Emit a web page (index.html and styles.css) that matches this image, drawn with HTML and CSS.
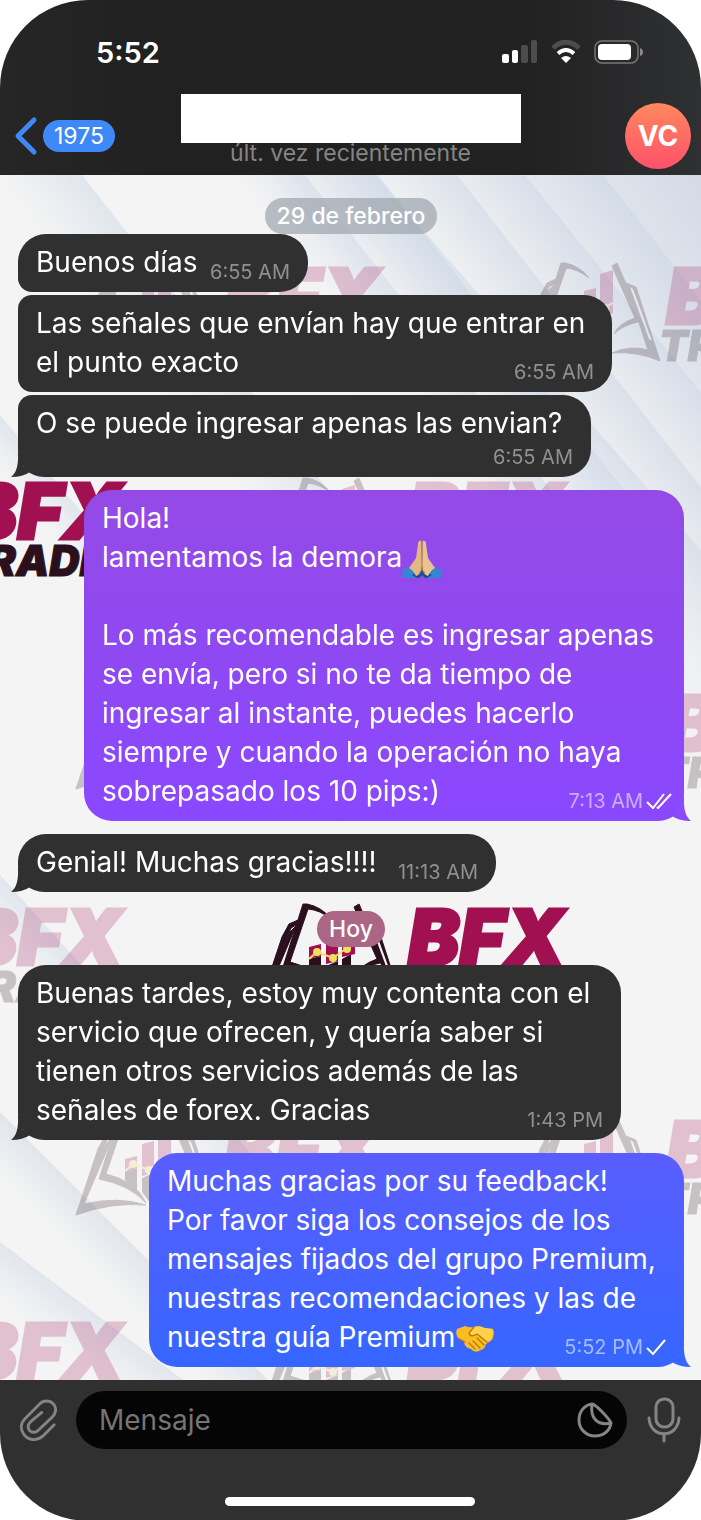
FILE: index.html
```html
<!DOCTYPE html>
<html lang="es">
<head>
    <meta charset="UTF-8">
    <meta name="viewport" content="width=device-width, initial-scale=1">
    <title>Chat</title>
    <link rel="stylesheet" href="styles.css">
</head>
<body>
<div class="phone">
    <header class="header">
        <div class="status">
            <span class="clock">5:52</span>
            <div class="status-icons">
                <svg width="36" height="24" viewBox="0 0 36 24">
                    <rect x="0" y="14" width="7" height="9" rx="2" fill="#fff"/>
                    <rect x="10" y="10" width="6" height="13" rx="2" fill="#fff"/>
                    <rect x="19" y="5" width="7" height="18" rx="2" fill="#4d4d4d"/>
                    <rect x="29" y="0" width="6" height="23" rx="2" fill="#4d4d4d"/>
                </svg>
                <svg width="30" height="24" viewBox="0 0 30 24" fill="none">
                    <path d="M2 8Q15 -3.500 28 8" stroke="#4d4d4d" stroke-width="5"/>
                    <path d="M7 13.500Q15 6.500 23 13.500" stroke="#fff" stroke-width="4"/>
                    <path d="M10 18Q15 14 20 18L15 23Z" fill="#fff"/>
                </svg>
                <svg width="50" height="24" viewBox="0 0 50 24">
                    <rect x="1" y="1" width="43" height="22" rx="7" fill="none" stroke="#777" stroke-width="1.500"/>
                    <rect x="4" y="4" width="33" height="16" rx="4" fill="#fff"/>
                    <path d="M46 8Q49 9 49 12T46 16Z" fill="#888"/>
                </svg>
            </div>
        </div>
        <div class="topbar">
            <a href="#" class="back">
                <svg width="24" height="40" viewBox="0 0 24 40" fill="none" stroke="#3f88f7" stroke-width="5" stroke-linecap="round" stroke-linejoin="round"><path d="M20 4L4 20L20 36"/></svg>
                <span class="unread">1975</span>
            </a>
            <div class="peer">
                <div class="peer-name"></div>
                <div class="peer-seen">últ. vez recientemente</div>
            </div>
            <a href="#" class="avatar">VC</a>
        </div>
    </header>

    <main class="chat">
        <svg class="wallpaper" viewBox="0 0 701 1205" preserveAspectRatio="xMidYMin slice" aria-hidden="true">
            <defs>
                <linearGradient id="band">
                    <stop offset="0" stop-color="#ccd8e8" stop-opacity="0"/>
                    <stop offset="1" stop-color="#c6d2e4" stop-opacity=".42"/>
                </linearGradient>
                <linearGradient id="corner" x1="1" y1="0" x2=".35" y2=".55">
                    <stop offset="0" stop-color="#d3dae6"/>
                    <stop offset="1" stop-color="#f4f4f4" stop-opacity="0"/>
                </linearGradient>
                <g id="book">
                    <g stroke="#2a0f1d">
                        <path d="M22 33L29 20L38 16L36 21L31 24L8 80L0 99Z"/>
                        <path d="M0 99L30 28L36 22L8 88Q42 80 70 89Q35 86 0 99Z"/>
                        <path d="M43 0L47 0Q62 3 71 15Q60 6 48 5L30 58Q60 65 70 87Q54 69 23 63Z"/>
                        <path d="M94 3L99 0L124 58Q104 62 96 71Q100 61 117 55Z"/>
                        <path d="M108 20L118 24L142 98Q120 88 94 90Q112 82 130 87Z"/>
                    </g>
                    <path class="light" d="M112 24L115 26L134 78L131 76Z"/>
                    <path d="M49 55L61 52V76L49 64ZM66 62L78 57V92L66 76ZM82 55L91 50V80L82 90Z"/>
                    <path class="wine" d="M49 43L61 40V52L49 55ZM66 28L78 25V57L66 60ZM82 11L95 7V50L82 53Z"/>
                    <path d="M49 55L57 48L73 54L87 44L95 40" fill="none" stroke="#f0df5a" stroke-width="2"/>
                    <g fill="#f0df5a"><circle cx="57" cy="48" r="4"/><circle cx="73" cy="54" r="4"/><circle cx="87" cy="45" r="4"/></g>
                </g>
                <g id="logo" class="logo">
                    <use href="#book"/>
                    <text class="wine logo-big" x="148" y="61">BFX</text>
                    <text class="logo-small" x="141" y="98">TRADING</text>
                </g>
            </defs>
            <rect width="701" height="1205" fill="#f4f4f4"/>
            <rect x="200" width="501" height="600" fill="url(#corner)"/>
            <g fill="url(#band)">
                <rect x="-90" width="90" height="330" transform="translate(82 0) skewX(38)"/>
                <rect x="-70" width="70" height="330" transform="translate(305 0) skewX(38)"/>
                <rect x="-70" width="70" height="330" transform="translate(378 0) skewX(38)"/>
                <rect x="-70" width="70" height="400" transform="translate(457 0) skewX(38)"/>
                <rect x="-70" width="70" height="500" transform="translate(525 0) skewX(39)"/>
                <rect x="-80" width="80" height="300" transform="translate(603 0) skewX(38)"/>
                <rect x="-110" width="110" height="600" transform="translate(375 0) skewX(41)"/>
                <rect x="-50" width="50" height="400" transform="translate(0 240) skewX(40)"/>
                <rect x="-60" width="60" height="300" transform="translate(0 700) skewX(42)"/>
                <rect x="-70" width="70" height="300" transform="translate(0 937) skewX(45)"/>
                <rect x="-80" width="80" height="200" transform="translate(0 1067) skewX(53)"/>
            </g>
            <g opacity=".22">
                <use href="#logo" x="76" y="88"/>
                <use href="#logo" x="518" y="88"/>
                <use href="#logo" x="260" y="303"/>
                <use href="#logo" x="76" y="515"/>
                <use href="#logo" x="518" y="515"/>
                <use href="#logo" x="-182" y="729"/>
                <use href="#logo" x="76" y="941"/>
                <use href="#logo" x="518" y="941"/>
                <use href="#logo" x="-182" y="1143"/>
                <use href="#logo" x="260" y="1143"/>
            </g>
            <use href="#logo" x="-182" y="303"/>
            <use href="#logo" x="260" y="729"/>
        </svg>

        <div class="date">29 de febrero</div>

        <div class="msg in short">
            <div class="last"><span>Buenos días</span><time>6:55 AM</time></div>
        </div>
        <div class="msg in follow long">
            Las señales que envían hay que entrar en
            <div class="last"><span>el punto exacto</span><time>6:55 AM</time></div>
        </div>
        <div class="msg in follow end medium">
            O se puede ingresar apenas las envian?
            <div class="meta"><time>6:55 AM</time></div>
            <svg class="tail" viewBox="0 0 30 24"><path d="M7 0Q8 18 0 24Q12 24 19 19L12 13L9 0Z"/></svg>
        </div>

        <div class="msg out purple">
            Hola!<br>
            lamentamos la demora<svg class="emoji" viewBox="0 0 40 38" role="img" aria-label="manos juntas">
                <path d="M0 30L10 26L18 34L15 38H1ZM40 30L30 26L22 34L25 38H39Z" fill="#3585cf"/>
                <path d="M10 35L15 38H17L20 35L23 38H25L30 35L20 30Z" fill="#16508f"/>
                <path d="M19.500 1Q16 0 16 4L14 18L7 28Q11 30 14 36Q20 34 20 26Z" fill="#e3b883"/>
                <path d="M20.500 1Q24 0 24 4L26 18L33 28Q29 30 26 36Q20 34 20 26Z" fill="#e9c390"/>
                <path d="M20 1V27Q20 31 17 33M20 27Q20 31 23 33" stroke="#a97442" fill="none"/>
            </svg><br>
            <br>
            Lo más recomendable es ingresar apenas<br>
            se envía, pero si no te da tiempo de<br>
            ingresar al instante, puedes hacerlo<br>
            siempre y cuando la operación no haya
            <div class="last"><span>sobrepasado los 10 pips:)</span><time class="read">7:13 AM<svg class="check" viewBox="0 0 26 16"><path d="M1 9L7 15L18 1M11 14L12 15L25 1"/></svg></time></div>
            <svg class="tail" viewBox="0 0 30 24"><path d="M23 0Q22 18 30 24Q18 24 11 19L18 13L21 0Z"/></svg>
        </div>

        <div class="msg in end reply">
            <div class="last"><span>Genial! Muchas gracias!!!!</span><time>11:13 AM</time></div>
            <svg class="tail" viewBox="0 0 30 24"><path d="M7 0Q8 18 0 24Q12 24 19 19L12 13L9 0Z"/></svg>
        </div>

        <div class="date today">Hoy</div>

        <div class="msg in end longer">
            Buenas tardes, estoy muy contenta con el<br>
            servicio que ofrecen, y quería saber si<br>
            tienen otros servicios además de las
            <div class="last"><span>señales de forex. Gracias</span><time>1:43 PM</time></div>
            <svg class="tail" viewBox="0 0 30 24"><path d="M7 0Q8 18 0 24Q12 24 19 19L12 13L9 0Z"/></svg>
        </div>

        <div class="msg out blue">
            Muchas gracias por su feedback!<br>
            Por favor siga los consejos de los<br>
            mensajes fijados del grupo Premium,<br>
            nuestras recomendaciones y las de
            <div class="last"><span>nuestra guía Premium<svg class="emoji" viewBox="0 0 40 38" role="img" aria-label="apretón de manos">
                <path d="M2 9L10 6Q14 8 19 7Q25 5 30 8L38 9Q40 14 37 20L31 24Q30 29 26 30Q20 34 16 29Q10 28 9 22L3 18Q0 13 2 9Z" fill="#f9bd22"/>
                <path d="M10 7L19 7L14 13Q16 17 21 14L33 22L37 17L38 9L29 8Q24 5 19 7" fill="#fdd24a"/>
                <path d="M19 7L14 13Q15 18 22 14L32 22M22 18L29 25M18 21L25 28M14 23L20 29M3 18L10 22" fill="none" stroke="#b9780f" stroke-width="1.300" stroke-linecap="round"/>
            </svg></span><time>5:52 PM<svg class="check single" viewBox="0 0 20 16"><path d="M1 9L7 15L19 1"/></svg></time></div>
            <svg class="tail" viewBox="0 0 30 24"><path d="M23 0Q22 18 30 24Q18 24 11 19L18 13L21 0Z"/></svg>
        </div>
    </main>

    <footer class="footer">
        <form class="composer">
            <button type="button" class="icon-btn" aria-label="Adjuntar">
                <svg width="38" height="44" viewBox="0 0 40 44" fill="none" stroke="#858585" stroke-width="3" stroke-linecap="round" stroke-linejoin="round"><path d="M37 27L25 39C18 45 9 43 5 37C1 31 2 25 6 21L22 5C26 1 32 1 36 5C40 9 39 15 35 19L20 33C17 36 13 35 11 33C9 30 9 27 12 24L24 14"/></svg>
            </button>
            <div class="field">
                <input type="text" placeholder="Mensaje" aria-label="Mensaje">
                <button type="button" class="icon-btn" aria-label="Stickers">
                    <svg width="36" height="36" viewBox="0 0 36 36" fill="none" stroke="#858585" stroke-width="3" stroke-linejoin="round"><path d="M15 2C7 3 2 10 2 18C2 27 9 34 18 34C26 34 33 29 34 21C33 18 20 3 15 2ZM15 2C13 16 20 24 34 21"/></svg>
                </button>
            </div>
            <button type="button" class="icon-btn" aria-label="Grabar voz">
                <svg width="34" height="46" viewBox="0 0 34 46" fill="none" stroke="#858585" stroke-width="3" stroke-linecap="round"><rect x="9" y="2" width="17" height="28" rx="8"/><path d="M2 21C3 42 31 42 32 21M17 37V44"/></svg>
            </button>
        </form>
        <div class="home-bar"></div>
    </footer>
</div>
</body>
</html>
```
FILE: styles.css
```css
*{
    box-sizing: border-box;
    margin: 0;
    padding: 0;
}
body{
    background-color: #fff;
    font-family: Inter, "Liberation Sans", sans-serif;
    color: #fff;
}
a{
    text-decoration: none;
    color: inherit;
}
button{
    border: 0;
    background: none;
    cursor: pointer;
}
svg{
    display: block;
}
.phone{
    display: flex;
    flex-direction: column;
    min-height: 100vh;
    border-radius: 88px;
    overflow: hidden;
    background-color: #f4f4f4;
}

/* header */
.header{
    height: 175px;
    background: linear-gradient(90deg, #262626, #212121 20%, #212121 75%, #2f3032);
}
.status{
    display: flex;
    justify-content: space-between;
    align-items: center;
    height: 94px;
    padding: 10px 57px 0 96px;
}
.clock{
    font-size: 29px;
    font-weight: 600;
}
.status-icons{
    display: flex;
    gap: 13px;
}
.topbar{
    display: grid;
    grid-template-columns: 1fr 340px 1fr;
    align-items: start;
}
.back{
    display: flex;
    align-items: center;
    gap: 5px;
    padding: 22px 0 0 14px;
}
.unread{
    height: 32px;
    padding: 0 11px;
    border-radius: 16px;
    background-color: #3f88f7;
    font-size: 23px;
    line-height: 32px;
}
.peer-name{
    position: relative;
    height: 49px;
    background-color: #fff;
}
.peer-seen{
    margin-top: -4px;
    text-align: center;
    font-size: 23px;
    line-height: 28px;
    color: #858585;
}
.avatar{
    justify-self: end;
    width: 66px;
    height: 66px;
    margin: 9px 10px 0 0;
    border-radius: 50%;
    background: linear-gradient(#ff885e, #ff516a);
    text-align: center;
    font-size: 28px;
    font-weight: 700;
    line-height: 66px;
}

/* chat */
.chat{
    position: relative;
    flex: 1;
    display: flex;
    flex-direction: column;
    align-items: flex-start;
    padding: 23px 17px 13px 18px;
    overflow: hidden;
}
.wallpaper{
    position: absolute;
    top: 0;
    left: 0;
    width: 100%;
    height: 100%;
}
.logo{
    fill: #2a0f1d;
}
.wine{
    fill: #a11152;
}
.light{
    fill: #f4f4f4;
}
.logo-big{
    font-size: 77px;
    font-weight: 900;
    font-style: italic;
    stroke: #a11152;
    stroke-width: 3;
}
.logo-small{
    font-size: 42px;
    font-weight: 900;
    font-style: italic;
    stroke: #2a0f1d;
    stroke-width: 1;
}
.date{
    position: relative;
    align-self: center;
    height: 36px;
    padding: 0 12px;
    border-radius: 18px;
    background-color: rgba(150, 158, 168, .65);
    font-size: 23px;
    font-weight: 500;
    line-height: 36px;
}
.today{
    margin: 19px 0 18px;
    background-color: #ab6585;
}
.msg{
    position: relative;
    padding: 9px 18px 10px;
    border-radius: 28px;
    font-size: 28px;
    line-height: 39px;
    white-space: nowrap;
}
.in{
    background-color: #303030;
    border-bottom-left-radius: 14px;
}
.out{
    align-self: flex-end;
    margin-top: 13px;
    border-bottom-right-radius: 26px;
}
.follow{
    margin-top: 3px;
    border-top-left-radius: 14px;
}
.end{
    border-bottom-left-radius: 26px;
}
.reply{
    margin-top: 13px;
    min-width: 478px;
}
.short{
    min-width: 290px;
}
.medium{
    min-width: 573px;
}
.long{
    min-width: 594px;
}
.longer{
    min-width: 603px;
}
.purple{
    min-width: 600px;
    background: linear-gradient(#944ae6, #8a48ff);
}
.blue{
    min-width: 535px;
    background: linear-gradient(#5a5dff, #3566ff);
}
.last{
    display: flex;
    justify-content: space-between;
    align-items: flex-end;
    gap: 10px;
}
.meta{
    display: flex;
    justify-content: flex-end;
    align-items: flex-end;
    height: 24px;
}
time{
    display: flex;
    align-items: center;
    gap: 3px;
    font-size: 20px;
    line-height: 20px;
    color: #909090;
}
.out time{
    color: rgba(255, 255, 255, .55);
}
.out .read{
    margin-right: -6px;
}
.check{
    flex: none;
    width: 26px;
    height: 16px;
    fill: none;
    stroke: #fff;
    stroke-width: 2;
}
.single{
    width: 20px;
}
.tail{
    position: absolute;
    bottom: 0;
    width: 30px;
    height: 24px;
}
.in .tail{
    left: -7px;
    fill: #303030;
}
.out .tail{
    right: -7px;
}
.purple .tail{
    fill: #8a48ff;
}
.blue .tail{
    fill: #3566ff;
}
.emoji{
    display: inline-block;
    width: 40px;
    height: 38px;
    margin: -4px 0;
    vertical-align: middle;
}

/* footer */
.footer{
    height: 141px;
    padding: 11px 20px 0 19px;
    background-color: #303030;
}
.composer{
    display: flex;
    align-items: center;
}
.icon-btn{
    flex: none;
}
.field{
    flex: 1;
    display: flex;
    align-items: center;
    height: 58px;
    margin: 0 20px 0 19px;
    padding: 0 14px 0 23px;
    border-radius: 29px;
    background-color: #050505;
}
.field input{
    flex: 1;
    min-width: 0;
    border: 0;
    outline: 0;
    background: none;
    font: 28px Inter, "Liberation Sans", sans-serif;
    color: #fff;
}
.field input::placeholder{
    color: #757575;
}
.home-bar{
    width: 250px;
    height: 9px;
    margin: 48px auto 0;
    border-radius: 5px;
    background-color: #fff;
}
```
